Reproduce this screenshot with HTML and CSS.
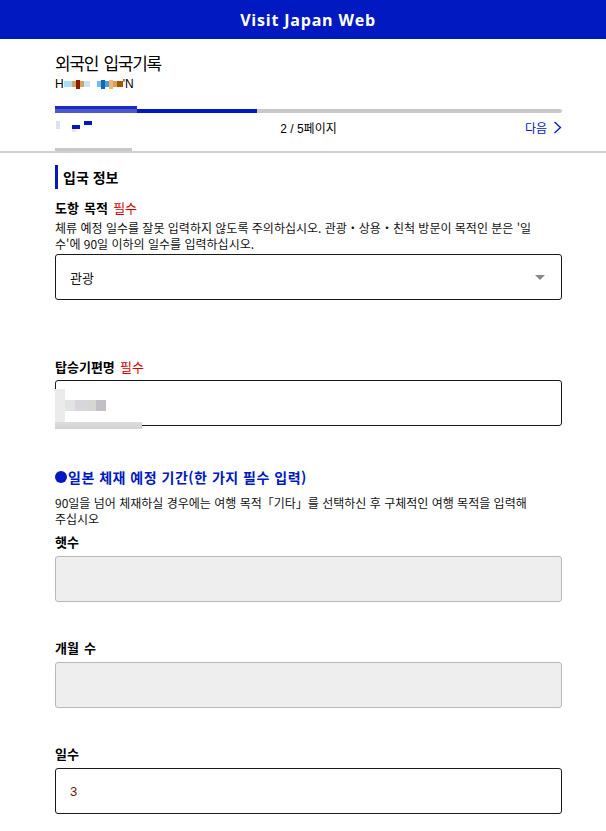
FILE: index.html
```html
<!DOCTYPE html>
<html lang="ko">
<head>
<meta charset="utf-8">
<link rel="stylesheet" href="styles.css">
</head>
<body>
<header class="topbar">Visit Japan Web</header>
<div class="head">
  <div class="wrap">
    <h1 class="title">외국인 입국기록</h1>
    <div class="name">
      <span class="ch">H</span>
      <span class="px c1"></span><span class="px c2"></span><span class="px c3 tall"></span><span class="px c2"></span><span class="px c4"></span>
      <span class="px gap"></span>
      <span class="px c5"></span><span class="px c6 tall"></span><span class="px c7"></span><span class="px c8 tall"></span><span class="px c2"></span><span class="px c9"></span>
      <span class="ch">'N</span>
    </div>
    <div class="progress">
      <div class="progress-fill"></div>
      <div class="progress-blur"></div>
    </div>
    <div class="pager">
      <div class="prev"><span class="pb pb0"></span><span class="pb pb1"></span><span class="pb pb2"></span><span class="pb pb3"></span></div>
      <div class="count">2 / 5페이지</div>
      <div class="next">다음
        <svg width="9" height="13" viewBox="0 0 9 13"><path d="M1.5 1 L7.5 6.5 L1.5 12" fill="none" stroke="#0019c0" stroke-width="1.3"/></svg>
      </div>
    </div>
    <div class="tabline"></div>
  </div>
</div>
<main class="wrap form">
  <h2 class="section">입국 정보</h2>

  <div class="field first">
    <div class="label">도항 목적 <span class="req">필수</span></div>
    <p class="note">체류 예정 일수를 잘못 입력하지 않도록 주의하십시오. 관광・상용・친척 방문이 목적인 분은 '일<br>수'에 90일 이하의 일수를 입력하십시오.</p>
    <div class="box select">관광<span class="caret"></span></div>
  </div>

  <div class="field gap-lg">
    <div class="label">탑승기편명 <span class="req">필수</span></div>
    <div class="box flight">
      <span class="bl bl-col"></span>
      <span class="bl bl-cells"></span>
      <span class="bl bl-strip"></span>
    </div>
  </div>

  <div class="group">
    <div class="group-title"><span class="dot"></span>일본 체재 예정 기간(한 가지 필수 입력)</div>
    <p class="note note-2">90일을 넘어 체재하실 경우에는 여행 목적「기타」를 선택하신 후 구체적인 여행 목적을 입력해 주십시오</p>
  </div>

  <div class="field after-group">
    <div class="label">햇수</div>
    <div class="box disabled"></div>
  </div>
  <div class="field gap-md">
    <div class="label">개월 수</div>
    <div class="box disabled"></div>
  </div>
  <div class="field gap-md">
    <div class="label">일수</div>
    <div class="box value">3</div>
  </div>
</main>
</body>
</html>
```
FILE: styles.css
```css
* { box-sizing: border-box; }
html, body { margin: 0; padding: 0; background: #fff; }
body {
  font-family: "Noto Sans CJK KR", "Noto Sans", sans-serif;
  color: #111;
}
.topbar {
  height: 39px;
  background: #0019c0;
  color: #fff;
  font-family: "Open Sans", sans-serif;
  font-weight: 700;
  font-size: 16px;
  letter-spacing: 0.8px;
  padding-left: 10px;
  display: flex;
  align-items: center;
  justify-content: center;
}
.wrap {
  width: 507px;
  margin-left: 55px;
}
.head { border-bottom: 2px solid #d0d0d0; }
.title {
  margin: 11px 0 0;
  font-size: 17px;
  letter-spacing: -1.3px;
  word-spacing: 2px;
  font-weight: 400;
  line-height: 26px;
  color: #000;
}
.name {
  font-family: "Liberation Sans", sans-serif;
  font-size: 12px;
  line-height: 14px;
  height: 14px;
  margin-top: 1px;
  display: flex;
  align-items: center;
  color: #000;
}
.ch { display: inline-block; }
.px { display: inline-block; width: 4px; height: 6px; flex: none; }
.tall { height: 9px; }
.gap { width: 7px; background: transparent; }
.c1 { background: #a9dff5; width: 8px; }
.c2 { background: #d9a05c; }
.c3 { background: #8b1a00; }
.c4 { background: #c9e7f3; width: 6px; }
.c5 { background: #6cc0ec; }
.c6 { background: #1466b5; }
.c7 { background: #4a9fe0; }
.c8 { background: #f2b575; }
.c9 { background: #a65500; width: 6px; }
.progress {
  position: relative;
  margin-top: 18px;
  height: 4px;
  background: #c8c8c8;
  border-radius: 2px;
}
.progress-fill {
  width: 202px;
  height: 100%;
  background: #0019c0;
  border-radius: 2px 0 0 2px;
}
.progress-blur {
  position: absolute;
  left: 0;
  top: -3px;
  width: 82px;
  height: 7px;
  background: linear-gradient(#1b2bc2 0 45%, #4a58c8 45% 100%);
}
.pager {
  display: grid;
  grid-template-columns: 1fr auto 1fr;
  align-items: center;
  margin-top: 4px;
  height: 20px;
  font-size: 12px;
}
.prev { position: relative; height: 20px; }
.pb { position: absolute; }
.pb0 { left: 1px; top: 4px; width: 4px; height: 8px; background: #e0e0f4; }
.pb1 { left: 17px; top: 8px; width: 8px; height: 4px; background: #0019c0; }
.pb2 { left: 17px; top: 12px; width: 4px; height: 3px; background: #fde0d4; }
.pb3 { left: 29px; top: 4px; width: 8px; height: 4px; background: #0019c0; }
.count { font-family: "Liberation Sans", "Noto Sans CJK KR", sans-serif; color: #000; }
.next {
  justify-self: end;
  color: #0019c0;
  display: flex;
  align-items: center;
  gap: 6px;
}
.tabline {
  margin-top: 11px;
  width: 77px;
  height: 3px;
  background: #c8c8c8;
}
.form { padding-bottom: 20px; }
.section {
  margin: 12px 0 0;
  border-left: 3px solid #0019c0;
  padding-left: 5px;
  font-size: 14px;
  font-weight: 700;
  line-height: 24px;
  color: #000;
}
.field { margin-top: 14px; }
.field.first { margin-top: 10px; }
.gap-lg { margin-top: 58px; }
.gap-md { margin-top: 37px; }
.label {
  font-size: 13px;
  font-weight: 700;
  line-height: 18px;
  word-spacing: 1.5px;
  color: #000;
}
.req { color: #d60000; font-weight: 400; }
.note {
  margin: 3px 0 0;
  font-size: 12px;
  line-height: 16px;
  color: #111;
}
.box {
  margin-top: 5px;
  height: 46px;
  border: 1px solid #1a1a1a;
  border-radius: 3px;
  display: flex;
  align-items: center;
  padding: 0 14px;
  font-size: 13px;
  position: relative;
}
.select { margin-top: 2px; justify-content: space-between; padding-right: 16px; }
.caret {
  width: 0; height: 0;
  border-left: 5px solid transparent;
  border-right: 5px solid transparent;
  border-top: 5px solid #888;
}
.flight { padding: 0; margin-top: 4px; }
.bl { position: absolute; }
.bl-col { left: -1px; top: 8px; width: 10px; height: 40px; background: #ebebeb; }
.bl-cells {
  left: 9px; top: 19px; width: 41px; height: 11px;
  background: linear-gradient(90deg, #e2e4e4 0 25%, #dad4de 25% 50%, #d6d6d4 50% 75%, #c4bec9 75% 100%);
}
.bl-strip { left: -1px; top: 41px; width: 87px; height: 7px; background: linear-gradient(#dcdcdc, #d2d2d2); }
.group { margin-top: 41px; }
.group-title {
  display: flex;
  align-items: center;
  font-size: 14px;
  font-weight: 700;
  letter-spacing: 0.5px;
  color: #0019c0;
  line-height: 20px;
}
.dot {
  width: 12px; height: 12px;
  border-radius: 50%;
  background: #0019c0;
  margin-right: 1px;
}
.note-2 { margin-top: 8px; line-height: 16px; word-break: keep-all; }
.field.after-group { margin-top: 6px; }
.disabled { background: #eeeeee; border-color: #b8b8b8; }
.value { color: #7a1010; font-family: "Liberation Sans", sans-serif; font-size: 13px; }
```
